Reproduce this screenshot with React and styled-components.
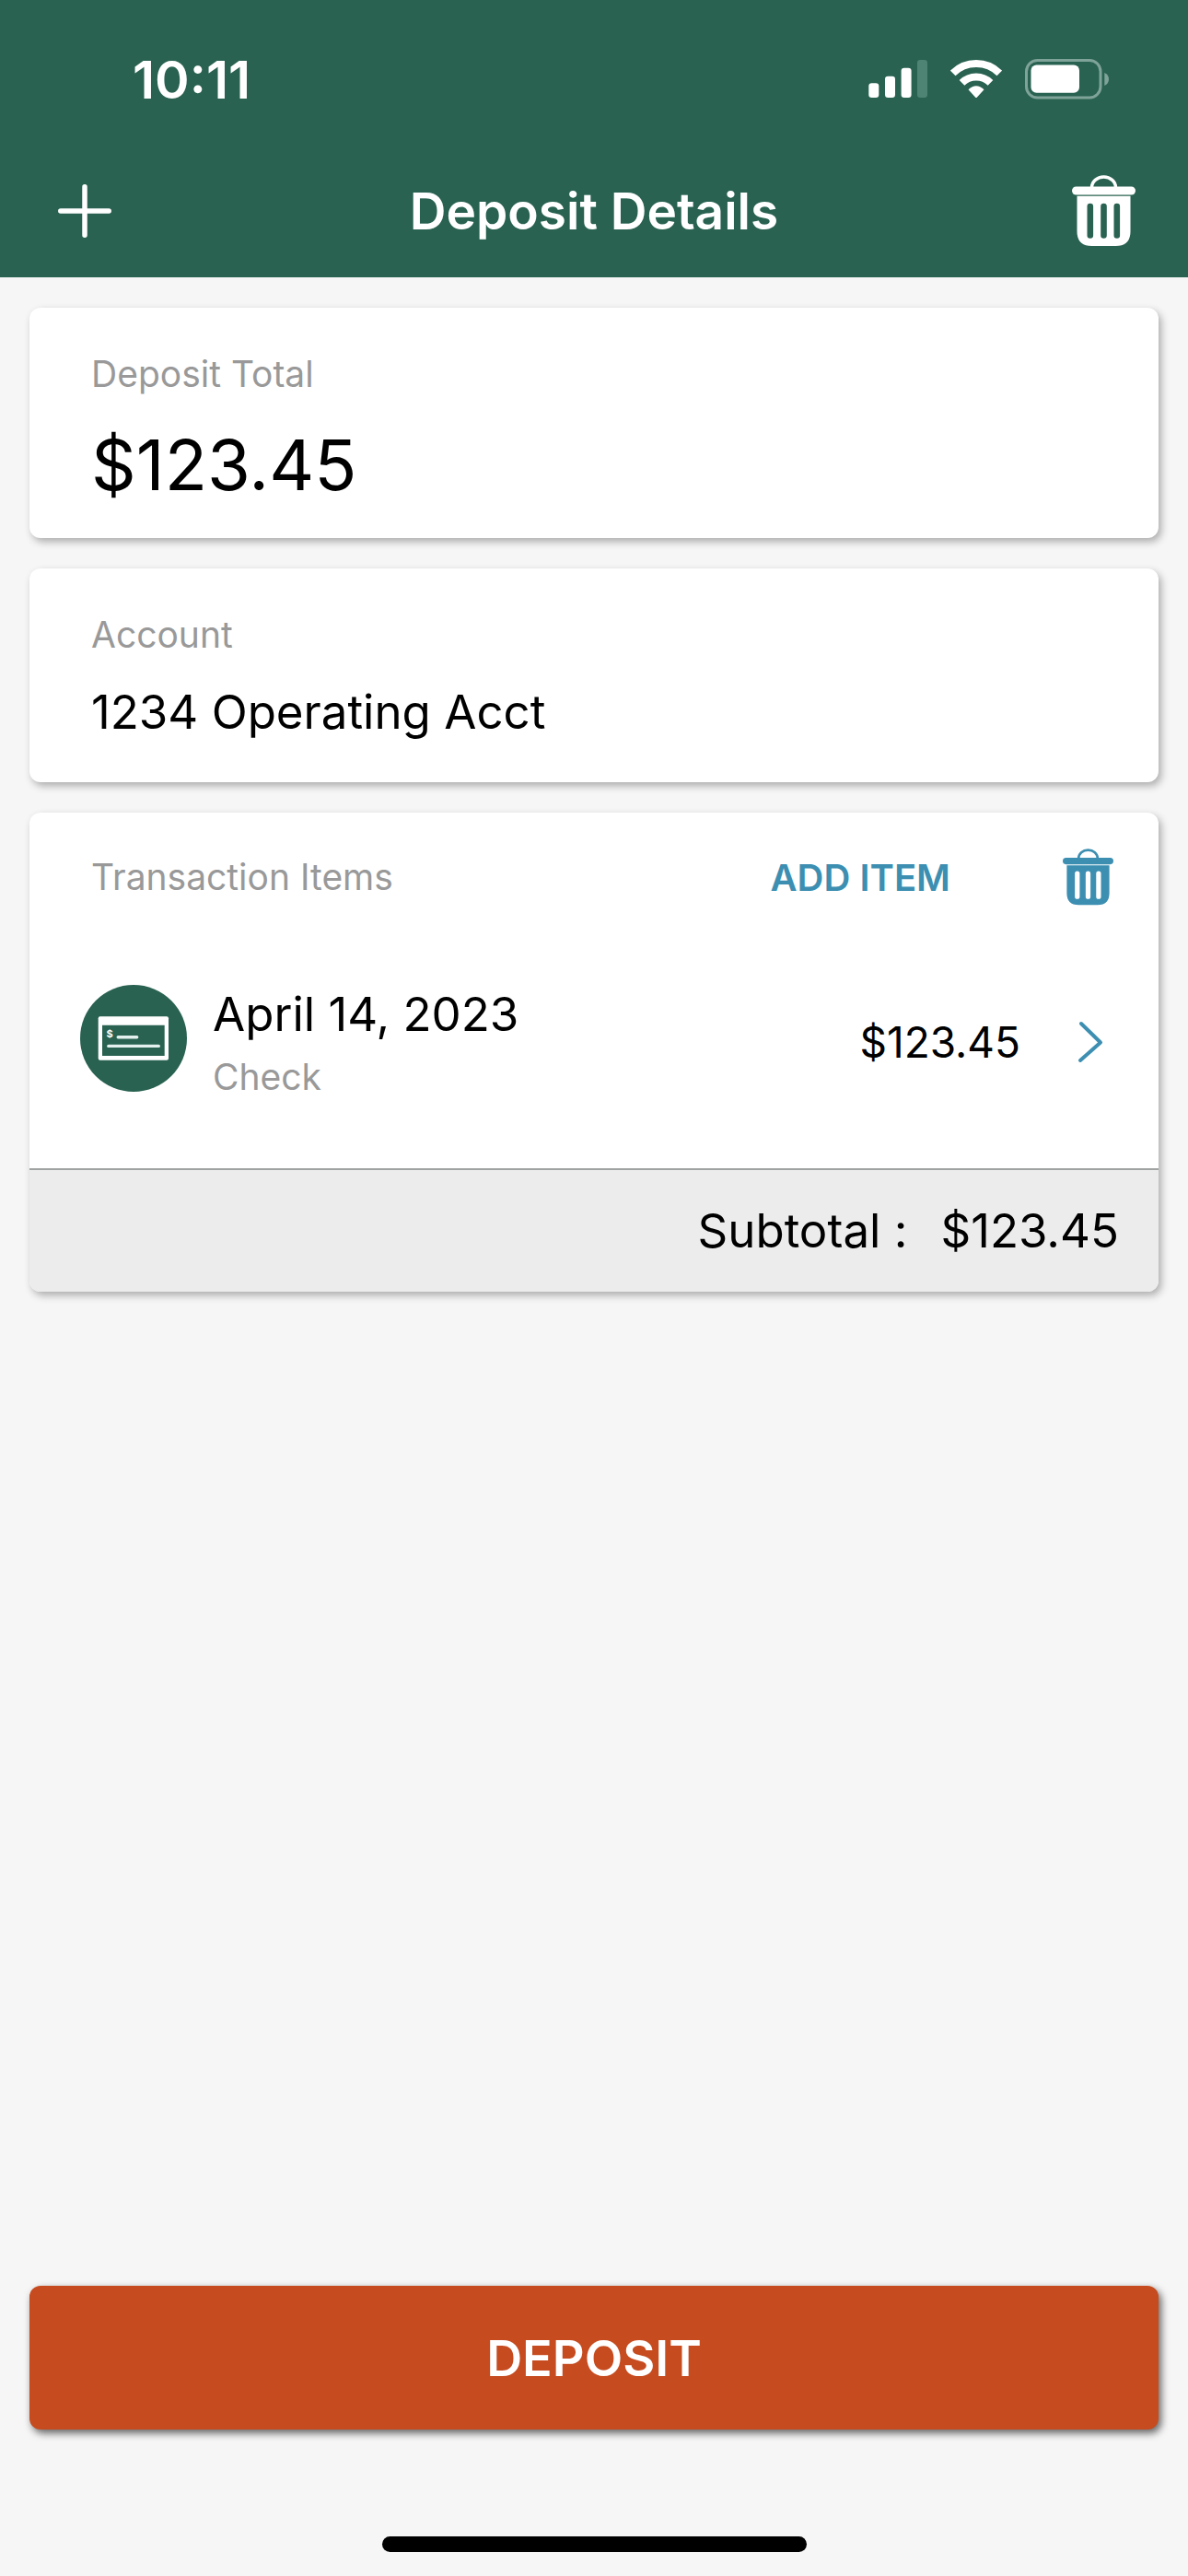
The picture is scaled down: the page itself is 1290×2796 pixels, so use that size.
import styled, { createGlobalStyle } from "styled-components";

const items = [
    { id: 1, date: "April 14, 2023", type: "Check", amount: "$123.45" },
]

const TrashIcon = ({ width }) => (
    <svg width={width} viewBox="0 0 69 78" fill="currentColor" aria-hidden="true">
        <path d="M21.5 13.5a13 11.5 0 0 1 26 0" fill="none" stroke="currentColor" strokeWidth="3.4" />
        <rect x="0" y="12.5" width="69" height="9" rx="4.5" />
        <path
            fillRule="evenodd"
            d="M5.5 22.8h58v38.2q0 16-16 16h-26q-16 0-16-16z
               M16.5 34v31.5a3.3 3.3 0 0 0 6.6 0v-31.5a3.3 3.3 0 0 0-6.6 0z
               M31.2 34v31.5a3.3 3.3 0 0 0 6.6 0v-31.5a3.3 3.3 0 0 0-6.6 0z
               M45.5 34v31.5a3.3 3.3 0 0 0 6.6 0v-31.5a3.3 3.3 0 0 0-6.6 0z"
        />
    </svg>
)

const PlusIcon = () => (
    <svg width="58" height="58" viewBox="0 0 58 58" fill="none" stroke="currentColor" strokeWidth="5.5" strokeLinecap="round" aria-hidden="true">
        <path d="M29 2.8v52.4M2.8 29h52.4" />
    </svg>
)

const ChevronIcon = () => (
    <svg width="28" height="46" viewBox="0 0 28 46" fill="none" stroke="currentColor" strokeWidth="4" strokeLinecap="round" strokeLinejoin="round" aria-hidden="true">
        <path d="M4 3l21 20.5L3 43" />
    </svg>
)

const SignalIcon = () => (
    <svg width="64" height="42" viewBox="0 0 64 42" fill="#fff" aria-hidden="true">
        <rect x="0.3" y="25.3" width="11" height="15.7" rx="3.3" />
        <rect x="18" y="17.7" width="11" height="23.3" rx="3.3" />
        <rect x="35.6" y="8.7" width="11" height="32.3" rx="3.3" />
        <rect x="53" y="0" width="11" height="41" rx="3.3" fill="#4e8474" />
    </svg>
)

const WifiIcon = () => (
    <svg width="56" height="42" viewBox="0 0 56 42" fill="none" stroke="#fff" strokeWidth="8" aria-hidden="true">
        <path d="M2.7 14.5a36 36 0 0 1 50.6 0" />
        <path d="M12.5 24.8a22 22 0 0 1 31 0" />
        <path d="M19.5 32.3q8.5-8.3 17 0l-7.5 8.2q-1 1-2 0z" fill="#fff" stroke="none" />
    </svg>
)

const BatteryIcon = () => (
    <svg width="92" height="44" viewBox="0 0 92 44" aria-hidden="true">
        <rect x="1.5" y="1.5" width="80.5" height="40.5" rx="12" fill="none" stroke="#7fa398" strokeWidth="3" />
        <rect x="6.5" y="6.6" width="52.5" height="30.2" rx="6" fill="#fff" />
        <path d="M86.3 15q4.7 2 4.7 7t-4.7 7z" fill="#7fa398" />
    </svg>
)

const CheckBadge = () => (
    <svg width="116" height="116" viewBox="0 0 116 116" aria-hidden="true">
        <circle cx="58" cy="58" r="58" fill="#296251" />
        <rect x="19.7" y="34.3" width="76.3" height="47.5" rx="2" fill="#fff" />
        <path d="M24 43.7h67.7v33.3H24z" fill="#296251" />
        <text x="28.5" y="57.4" fontSize="11" fontWeight="700" fill="#fff">$</text>
        <path d="M41.2 56.8h20.5M30.8 66.4h54.5" stroke="#e4f0ee" strokeWidth="3.4" strokeLinecap="round" />
    </svg>
)

export default function App() {
    return (
        <Page>
            <GlobalStyle />
            <Header>
                <StatusBar>
                    <Time>10:11</Time>
                    <StatusIcons>
                        <SignalIcon />
                        <WifiIcon />
                        <BatteryIcon />
                    </StatusIcons>
                </StatusBar>
                <NavBar>
                    <IconButton aria-label="New deposit"><PlusIcon /></IconButton>
                    <Title>Deposit Details</Title>
                    <IconButton aria-label="Delete deposit"><TrashIcon width={69} /></IconButton>
                </NavBar>
            </Header>

            <Main>
                <InfoCard $compact>
                    <Label>Deposit Total</Label>
                    <Total>$123.45</Total>
                </InfoCard>

                <InfoCard>
                    <Label>Account</Label>
                    <Value>1234 Operating Acct</Value>
                </InfoCard>

                <Card>
                    <CardHeader>
                        <Label>Transaction Items</Label>
                        <AddButton>ADD ITEM</AddButton>
                        <IconButton $blue aria-label="Delete items"><TrashIcon width={55} /></IconButton>
                    </CardHeader>
                    {items.map((item) => (
                        <ItemRow key={item.id} href="#item">
                            <CheckBadge />
                            <ItemInfo>
                                <Value>{item.date}</Value>
                                <Label>{item.type}</Label>
                            </ItemInfo>
                            <Amount>{item.amount}</Amount>
                            <ChevronIcon />
                        </ItemRow>
                    ))}
                    <Subtotal>
                        <Value>Subtotal :</Value>
                        <Value>$123.45</Value>
                    </Subtotal>
                </Card>
            </Main>

            <Footer>
                <DepositButton>DEPOSIT</DepositButton>
                <HomeIndicator />
            </Footer>
        </Page>
    )
}

const GlobalStyle = createGlobalStyle`
    * {
        box-sizing: border-box;
    }

    body {
        margin: 0;
        background-color: #f6f6f6;
        font-family: Inter, "Liberation Sans", sans-serif;
        color: #000;
    }

    button {
        border: none;
        padding: 0;
        background: none;
        font-family: inherit;
        cursor: pointer;
    }

    h1, p {
        margin: 0;
    }

    svg {
        display: block;
        flex-shrink: 0;
    }
`

const Page = styled.div`
    display: flex;
    flex-direction: column;
    min-height: 100vh;
`

const Header = styled.header`
    background-color: #296251;
    color: #fff;
`

const StatusBar = styled.div`
    display: flex;
    justify-content: space-between;
    align-items: center;
    height: 156px;
    padding: 16px 85px 0 144px;
`

const Time = styled.p`
    font-size: 57px;
    font-weight: 600;
`

const StatusIcons = styled.div`
    display: flex;
    align-items: center;
    gap: 25px;
`

const NavBar = styled.nav`
    display: grid;
    grid-template-columns: 69px 1fr 69px;
    align-items: center;
    height: 145px;
    padding: 0 57px;
`

const Title = styled.h1`
    font-size: 55px;
    font-weight: 600;
    text-align: center;
`

const IconButton = styled.button`
    display: flex;
    justify-content: center;
    color: ${({ $blue }) => ($blue ? "#3d8fb2" : "#fff")};
`

const Main = styled.main`
    display: flex;
    flex-direction: column;
    gap: 33px;
    padding: 33px 32px;
`

const Card = styled.section`
    border-radius: 12px;
    background-color: #fff;
    box-shadow: 3px 4px 8px rgba(0, 0, 0, 0.3);
    overflow: hidden;
`

const InfoCard = styled(Card)`
    display: flex;
    flex-direction: column;
    gap: 28px;
    padding: 48px 67px ${({ $compact }) => ($compact ? "34px" : "44px")};
`

const Label = styled.p`
    font-size: 39px;
    line-height: 48px;
    color: #999;
`

const Total = styled.p`
    font-size: 76px;
    line-height: 92px;
`

const Value = styled.p`
    font-size: 51px;
    line-height: 64px;
`

const CardHeader = styled.div`
    display: flex;
    align-items: center;
    height: 140px;
    padding: 0 49px 0 67px;
    gap: 122px;

    ${Label} {
        flex: 1;
    }
`

const AddButton = styled.button`
    font-size: 40px;
    font-weight: 600;
    color: #3d8fb2;
`

const ItemRow = styled.a`
    display: flex;
    align-items: center;
    padding: 47px 60px 75px 55px;
    color: #3d8fb2;
    text-decoration: none;

    > svg:first-child {
        align-self: flex-start;
    }
`

const ItemInfo = styled.div`
    display: flex;
    flex: 1;
    flex-direction: column;
    gap: 12px;
    padding-left: 28px;

    ${Value} {
        color: #000;
    }
`

const Amount = styled.p`
    margin-right: 62px;
    font-size: 46px;
    color: #000;
`

const Subtotal = styled.div`
    display: flex;
    justify-content: flex-end;
    align-items: center;
    gap: 36px;
    height: 134px;
    padding: 0 43px;
    border-top: 2px solid #a0a3a3;
    background-color: #ececec;
`

const Footer = styled.footer`
    display: flex;
    flex-direction: column;
    align-items: center;
    gap: 116px;
    margin-top: auto;
    padding: 0 32px 26px;
`

const DepositButton = styled.button`
    width: 100%;
    height: 156px;
    border-radius: 12px;
    background-color: #c64b1f;
    box-shadow: 3px 4px 8px rgba(0, 0, 0, 0.6);
    font-size: 54px;
    font-weight: 600;
    color: #fff;
`

const HomeIndicator = styled.div`
    width: 461px;
    height: 17px;
    border-radius: 9px;
    background-color: #000;
`
